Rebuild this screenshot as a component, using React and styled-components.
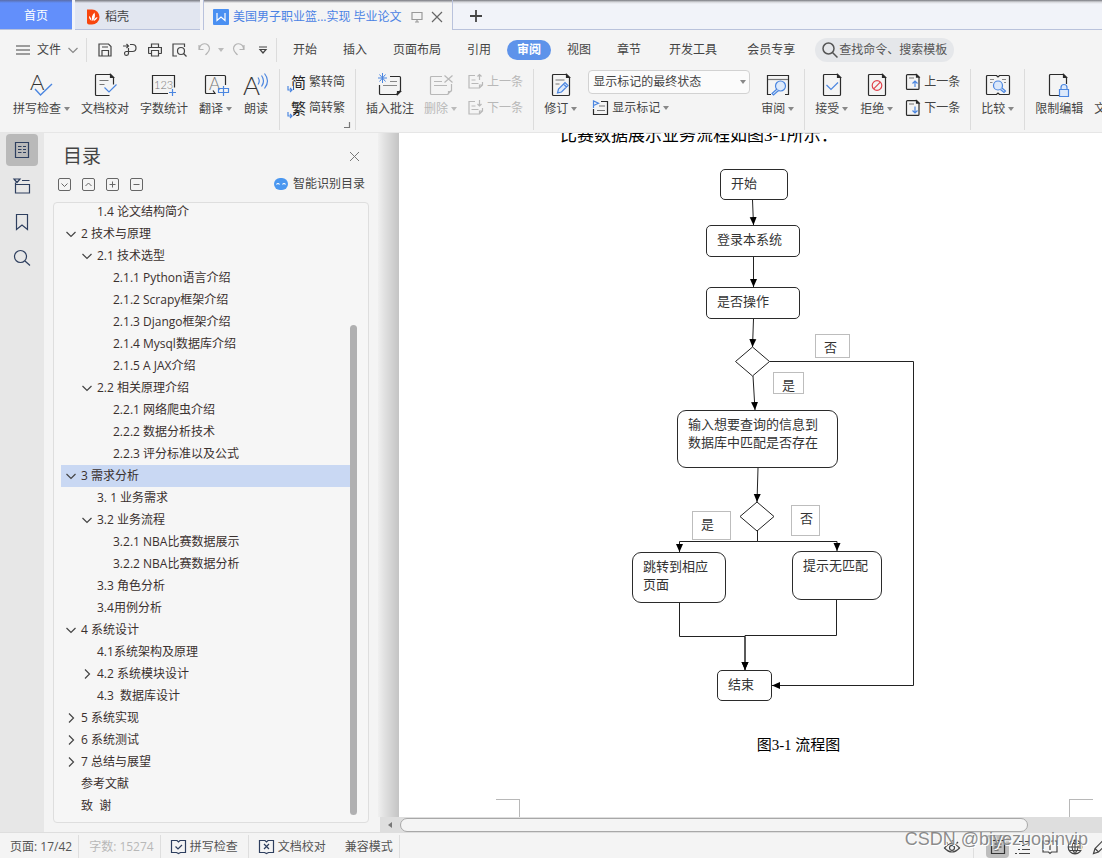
import React from 'react'
import styled, { createGlobalStyle } from 'styled-components'

const GlobalStyle = createGlobalStyle`
  * {
    box-sizing: border-box;
  }
  body {
    margin: 0;
    overflow: hidden;
    background: #f4f4f4;
  }
  button,
  select {
    margin: 0;
    padding: 0;
    border: 0;
    background: none;
    color: inherit;
    font: inherit;
    white-space: nowrap;
  }
  svg {
    display: block;
    flex: none;
    overflow: visible;
  }
`

const Shell = styled.div`
  position: relative;
  display: flex;
  flex-direction: column;
  height: 100vh;
  overflow: hidden;
  color: #444;
  font-family: 'Open Sans', 'Noto Sans CJK SC', sans-serif;
  font-size: 12px;
  line-height: 16px;
`

/* ---------- window tabs ---------- */

const TabBar = styled.div`
  display: flex;
  flex: none;
  height: 30px;
  background: linear-gradient(#77787f, #d4d5da 2px, #f1f3f9 4px);
`

const HomeTab = styled.button`
  width: 72px;
  padding-top: 2px;
  background: linear-gradient(#5a6da8, #628ffb 3px);
  color: #fff;
  border-bottom: 1px solid #b9c2dc;
`

const DocerTab = styled.button`
  display: flex;
  align-items: center;
  gap: 5px;
  width: 131px;
  padding: 3px 0 0 11px;
  border: solid #f1f3f9;
  border-width: 0 3px;
  border-right-color: #f4f4f6;
  background: linear-gradient(#77787f, #e2e6f0 3px);
  box-shadow: inset 0 -1px #b9c2dc;
`

const FileTab = styled.div`
  display: flex;
  align-items: center;
  width: 250px;
  padding: 3px 0 0 9px;
  border: solid #b9c2dc;
  border-width: 0 1px;
  background: linear-gradient(#77787f, #f4f4f4 3px);
  color: #4a82e4;
`

const FileName = styled.button`
  display: flex;
  align-items: center;
  gap: 4px;
  margin-right: 9px;
`

const TabIcon = styled.button`
  margin-right: 8px;
  color: ${props => props.$color};
`

const TabRest = styled.div`
  display: flex;
  flex: 1;
  align-items: center;
  padding: 3px 0 0 17px;
  border-bottom: 1px solid #b9c2dc;
`

/* ---------- menu row ---------- */

const MenuBar = styled.div`
  display: flex;
  flex: none;
  align-items: center;
  height: 39px;
  overflow: hidden;
  background: #f4f4f4;
`

const FileMenu = styled.button`
  display: flex;
  align-items: center;
  gap: 7px;
  width: 86px;
  padding-left: 16px;
`

const QuickBar = styled.div`
  display: flex;
  align-items: center;
  width: 191px;
  height: 24px;
  padding-left: 5px;
  border: solid #dcdcdc;
  border-width: 0 1px;
`

const QuickButton = styled.button`
  display: flex;
  align-items: center;
  justify-content: center;
  width: ${props => props.$width || 25}px;
  height: 22px;
  color: ${props => (props.$off ? '#b4b4b4' : '#444')};
`

const MenuTabs = styled.nav`
  display: flex;
  align-items: center;
  padding-left: 3px;
`

const MenuTab = styled.button`
  height: 20px;
  padding: 0 ${props => (props.$wide ? 15 : 13)}px;
`

const ActiveMenuTab = styled.button`
  height: 20px;
  margin: 0 3px;
  padding: 0 10px;
  border-radius: 10px;
  background: #5e93ea;
  color: #fff;
  font-weight: 700;
`

const Search = styled.button`
  display: flex;
  align-items: center;
  gap: 1px;
  height: 24px;
  margin-left: 5px;
  padding: 0 7px;
  border-radius: 12px;
  background: #e5e7ea;
  color: #555;
`

/* ---------- ribbon ---------- */

const RibbonBar = styled.div`
  position: relative;
  z-index: 1;
  display: flex;
  flex: none;
  height: 64px;
  padding-left: 3px;
  overflow: hidden;
  background: #f4f4f4;
  border-bottom: 1px solid #e6e6e6;
`

const Group = styled.div`
  position: relative;
  display: flex;
  flex: none;
  align-items: flex-start;
  gap: ${props => props.$gap || 11}px;
  height: 61px;
  padding: 0 10px;
  border-right: 1px solid #dcdcdc;
`

const BigButton = styled.button`
  display: flex;
  flex-direction: column;
  align-items: center;
  gap: 4px;
  padding-top: 4px;
  color: ${props => (props.$off ? '#b8b8b8' : '#444')};
`

const Label = styled.span`
  display: flex;
  align-items: center;
  gap: 3px;
`

const Stack = styled.div`
  display: flex;
  flex-direction: column;
`

const SmallButton = styled.button`
  display: flex;
  align-items: center;
  gap: 3px;
  height: 26px;
  padding-left: ${props => props.$indent || 0}px;
  color: ${props => (props.$off ? '#b8b8b8' : '#444')};
`

const Swap = styled.span`
  position: relative;
  width: 15px;
  color: #222;
  font-size: 15px;
  svg {
    position: absolute;
    left: -4px;
    bottom: -2px;
    background: #f4f4f4;
  }
`

const Launcher = styled.button`
  position: absolute;
  right: 5px;
  bottom: 2px;
`

const SelectWrap = styled.label`
  display: grid;
  align-items: center;
  width: 162px;
  height: 26px;
  svg {
    grid-area: 1 / 1;
    justify-self: end;
    margin-right: 4px;
    pointer-events: none;
  }
`

const Select = styled.select`
  grid-area: 1 / 1;
  width: 100%;
  height: 24px;
  padding-left: 4px;
  border: 1px solid #d2d2d2;
  border-radius: 4px;
  background: #fbfbfb;
  appearance: none;
`

/* ---------- workspace ---------- */

const Workspace = styled.div`
  display: flex;
  flex: 1;
  min-height: 0;
`

const Rail = styled.div`
  display: flex;
  flex: none;
  flex-direction: column;
  gap: 4px;
  width: 44px;
  padding: 1px 6px;
  background: #e7e7e7;
`

const RailButton = styled.button`
  display: flex;
  align-items: center;
  justify-content: center;
  height: 32px;
  border-radius: 4px;
  background: ${props => (props.$active ? '#b9b9b9' : 'none')};
  color: #2e3f5f;
`

const Panel = styled.aside`
  display: flex;
  flex: none;
  flex-direction: column;
  width: 334px;
  padding: 9px 9px 9px 9px;
`

const PanelHead = styled.div`
  display: flex;
  align-items: center;
  justify-content: space-between;
  height: 28px;
  padding: 0 9px 0 10px;
`

const PanelTitle = styled.h2`
  margin: 0;
  font-size: 19px;
  font-weight: 400;
`

const PanelTools = styled.div`
  display: flex;
  align-items: center;
  gap: 11px;
  height: 28px;
  padding: 0 4px 0 5px;
`

const Detect = styled.button`
  display: flex;
  align-items: center;
  gap: 5px;
  margin-left: auto;
`

const Outline = styled.div`
  display: flex;
  flex: 1;
  min-height: 0;
  margin-top: 4px;
  padding: 0 10px 0 7px;
  overflow: hidden;
  border: 1px solid #dedede;
  border-radius: 4px;
  background: #f6f6f6;
`

const Tree = styled.ul`
  flex: 1;
  margin: -2px 0 0;
  padding: 0;
  list-style: none;
`

const TreeRow = styled.li`
  display: flex;
  align-items: center;
  height: 22px;
  padding-left: ${props => 5 + props.$level * 16}px;
  background: ${props => (props.$active ? '#c9d8f3' : 'none')};
  color: #3a302e;
  white-space: pre;
`

const Twist = styled.span`
  width: 15px;
`

const Track = styled.div`
  display: flex;
  align-items: flex-end;
  width: 8px;
  padding-bottom: 7px;
`

const Thumb = styled.div`
  width: 7px;
  height: 80%;
  border-radius: 4px;
  background: #b0b0b1;
`

/* ---------- document ---------- */

const DocArea = styled.main`
  display: flex;
  flex: 1;
  flex-direction: column;
  min-width: 0;
`

const DocView = styled.div`
  display: flex;
  flex: 1;
  min-height: 0;
  overflow: hidden;
`

const Gutter = styled.div`
  flex: none;
  width: 21px;
  background: linear-gradient(90deg, #f0f0f0, #e2e2e2 6px, #d4d4d4 13px, #c4c4c4);
`

const Page = styled.div`
  display: flex;
  flex: 1;
  flex-direction: column;
  min-width: 0;
  margin-top: -9px;
  background: #fff;
  color: #000;
  font-family: 'Liberation Serif', 'Noto Sans CJK SC', serif;
`

const Body = styled.div`
  padding: 0 33px 0 121px;
`

const Paragraph = styled.p`
  margin: 0 0 16px;
  padding-left: 40px;
  font-size: 17px;
  line-height: 24px;
`

const Figure = styled.figure`
  display: flex;
  flex-direction: column;
  align-items: center;
  gap: 21px;
  margin: 0;
`

const Canvas = styled.div`
  position: relative;
  width: 325px;
  height: 550px;
  font-family: 'Noto Sans CJK SC', sans-serif;
`

const Node = styled.div`
  position: absolute;
  left: ${props => props.$x}px;
  top: ${props => props.$y}px;
  width: ${props => props.$w}px;
  height: ${props => props.$h}px;
  padding: 4px 10px;
  border: 1px solid #2b2b2b;
  border-radius: ${props => props.$r}px;
  color: #333;
  font-size: 13px;
  line-height: 18px;
  white-space: pre;
`

const Tag = styled(Node)`
  padding: 3px 8px;
  border-color: #bdbdbd;
`

const Caption = styled.figcaption`
  padding-left: 8px;
  font-size: 15px;
  line-height: 20px;
`

const Margins = styled.div`
  display: flex;
  justify-content: space-between;
  margin-top: auto;
  padding: 0 9px 0 97px;
`

const Corner = styled.span`
  width: 24px;
  height: 18px;
  border-top: 1px solid #b8b8b8;
  border-right: ${props => (props.$left ? '1px solid #b8b8b8' : 0)};
  border-left: ${props => (props.$left ? 0 : '1px solid #b8b8b8')};
`

const HScroll = styled.div`
  display: flex;
  flex: none;
  align-items: center;
  height: 15px;
  margin-left: 2px;
  background: #dedede;
`

const HArrow = styled.button`
  display: flex;
  align-items: center;
  justify-content: center;
  width: 20px;
`

const HThumb = styled.div`
  width: 87%;
  height: 14px;
  border: 1px solid #a8a8a8;
  border-radius: 7px;
  background: #f4f4f4;
`

/* ---------- status bar ---------- */

const StatusBar = styled.footer`
  display: flex;
  flex: none;
  height: 26px;
  padding-top: 2px;
  overflow: hidden;
  background: #f4f4f4;
  border-top: 1px solid #dedede;
`

const StatusItem = styled.button`
  display: flex;
  align-items: center;
  gap: 4px;
  padding: 0 ${props => props.$right || 6}px 0 10px;
  border-right: ${props => (props.$open ? 0 : '1px solid #dedede')};
  color: ${props => (props.$off ? '#b8b8b8' : '#555')};
`

const Views = styled.div`
  display: flex;
  align-items: center;
  margin-left: auto;
  margin-right: -10px;
`

const ViewButton = styled.button`
  display: flex;
  align-items: center;
  justify-content: center;
  width: ${props => props.$width || 25}px;
  height: 23px;
  border-radius: 4px;
  background: ${props => (props.$active ? '#bdbdbd' : 'none')};
`

const Divider = styled.span`
  align-self: stretch;
  width: 1px;
  margin: 0 12px 0 9px;
  background: #dedede;
`

const Watermark = styled.span`
  position: absolute;
  right: 14px;
  bottom: 8px;
  color: rgba(120, 120, 120, 0.85);
  font-family: 'Liberation Sans', sans-serif;
  font-size: 18px;
  line-height: 22px;
  pointer-events: none;
  text-shadow: 1px 1px #fff;
`

/* ---------- icons ---------- */

const BLUE = '#4b86e0'

const Svg = ({ w = 16, h = w, children, ...rest }) => (
  <svg
    width={w}
    height={h}
    viewBox={`0 0 ${w} ${h}`}
    fill="none"
    stroke="currentColor"
    strokeWidth="1.2"
    aria-hidden="true"
    {...rest}
  >
    {children}
  </svg>
)

const Caret = ({ color = '#888' }) => (
  <Svg w={6} h={4} stroke="none">
    <path d="M0 0h6L3 4z" fill={color} />
  </Svg>
)

const Chevron = ({ right, color = '#444' }) => (
  <Svg w={10} stroke={color}>
    <path d={right ? 'M3 0.5l4.5 4.5L3 9.5' : 'M0.5 3L5 7.5 9.5 3'} />
  </Svg>
)

const Glyph = ({ x, y, size, color = '#333', children }) => (
  <text
    x={x}
    y={y}
    fontSize={size}
    fontWeight="300"
    fontFamily="Lato"
    fill={color}
    stroke="none"
  >
    {children}
  </text>
)

const Sheet = ({ children }) => (
  <Svg w={24} stroke="#2b2b2b" strokeWidth="1.2">
    <path d="M17.5 1.500H4.500a1 1 0 0 0-1 1v19a1 1 0 0 0 1 1h15a1 1 0 0 0 1-1V4.500z" />
    <path d="M17.500 1.500v3h3z" fill="#2b2b2b" />
    {children}
  </Svg>
)

const SmallSheet = ({ down }) => (
  <Svg w={16} stroke="#2b2b2b">
    <path d="M11.500 0.600H2.500a1 1 0 0 0-1 1v12.800a1 1 0 0 0 1 1h10.500a1 1 0 0 0 1-1V3z" />
    <path d="M11.500 0.600v2.500h2.500z" fill="#2b2b2b" />
    <path d="M4 4h5" stroke="#888" />
    <path
      d={down ? 'M10 6.500V13M7.500 10.500L10 13l2.500-2.500' : 'M10 13V7M7.500 9.500L10 7l2.500 2.500'}
      stroke={BLUE}
    />
  </Svg>
)

const SmallNote = ({ down }) => (
  <Svg w={17} h={16}>
    <path d="M8 1.500H2v12.500h10.500l3-3V8M15.500 11h-3v3M4.500 6h4M4.500 9.500h7" />
    <path d={down ? 'M12.500 0v6M10.500 4l2 2 2-2' : 'M12.500 6V0.500M10.500 2.500l2-2 2 2'} />
  </Svg>
)

const SpellIcon = () => (
  <Svg w={24} stroke={BLUE} strokeWidth="1.4">
    <Glyph x={0} y={17} size={22}>A</Glyph>
    <path d="M5 16l5.500 6L22 11" />
  </Svg>
)

const ProofIcon = () => (
  <Svg w={24} stroke="#2b2b2b">
    <path d="M16.500 22.500h-13a1 1 0 0 1-1-1v-19a1 1 0 0 1 1-1h14l3 3v7" />
    <path d="M17.500 1.500v3h3z" fill="#2b2b2b" />
    <path d="M6.500 7.500h9M6.500 11.500h5" stroke="#777" />
    <path d="M11.500 14.500l4.500 4.500 7.500-7.500" stroke={BLUE} />
  </Svg>
)

const CountIcon = () => (
  <Svg w={26} h={24} stroke="#2b2b2b">
    <path d="M17 20.500H1.500V2.500h22v12" />
    <Glyph x={3} y={16} size={11} color="#777">123</Glyph>
    <path d="M21.500 16v7M18 19.500h7" stroke={BLUE} />
  </Svg>
)

const TranslateIcon = () => (
  <Svg w={26} h={24} stroke="#2b2b2b">
    <path d="M9 20.500H3.500a1 1 0 0 1-1-1v-16a1 1 0 0 1 1-1h18a1 1 0 0 1 1 1V12M9 20.500h3l-2-3" />
    <Glyph x={6} y={17} size={17} color="#777">A</Glyph>
    <path d="M15.500 15.500h10v4h-10zM20.500 13v10" stroke={BLUE} />
  </Svg>
)

const ReadIcon = () => (
  <Svg w={26} h={24} stroke={BLUE}>
    <Glyph x={0} y={22} size={26}>A</Glyph>
    <path d="M15 4.500q2.500 3.500 0 7M18.500 2.500q4 5.500 0 11M21.500 0.500q6 7.500 0 15" />
  </Svg>
)

const CommentIcon = () => (
  <Svg w={24} stroke="#2b2b2b">
    <path d="M12 3.500h9.500a1 1 0 0 1 1 1v13l-4 4H2.500a1 1 0 0 1-1-1V12" />
    <path d="M22.500 18.500h-3v3z" fill="#2b2b2b" />
    <path d="M12 8.500h7M5 12.500h14" stroke="#888" />
    <path d="M4.500 0v10M0 5h9M1.500 1.500l6 7M7.500 1.500l-6 7" stroke={BLUE} strokeWidth="1" />
  </Svg>
)

const DeleteIcon = () => (
  <Svg w={24}>
    <path d="M13 3.500H2.500a1 1 0 0 0-1 1v16a1 1 0 0 0 1 1h16l4-4V11M22.500 18.500h-3v3M5 8.500h8M5 12.500h13" />
    <path d="M15.500 2.500l8 7M23.500 2.500l-8 7" />
  </Svg>
)

const ReviseIcon = () => (
  <Sheet>
    <path d="M6.500 7h9M6.500 11h4" stroke="#777" />
    <path
      d="M8.500 20l1-4 6.500-6.500 3 3-6.500 6.500zM14.500 11l3 3"
      fill="#dce9fb"
      stroke={BLUE}
    />
  </Sheet>
)

const FlagIcon = () => (
  <Svg w={17} h={16} stroke="#2b2b2b">
    <path d="M9 1.500h6.500v13H1.500V9" />
    <path d="M7 6h6M5 10.500h8" stroke="#777" />
    <path d="M1.500 8V1l5 2.200-5 2.300" stroke={BLUE} />
  </Svg>
)

const ReviewIcon = () => (
  <Svg w={24} stroke="#2b2b2b">
    <path d="M5 21.500H1.500v-19h21v19H19" />
    <path d="M2 6.500h20" stroke="#777" />
    <circle cx="14.500" cy="13" r="5" fill="#dce9fb" stroke={BLUE} />
    <path d="M11 16l-5 4.500L7.500 22l5-4.500" fill="#dce9fb" stroke={BLUE} />
  </Svg>
)

const AcceptIcon = () => (
  <Sheet>
    <path d="M6.500 12l4.500 4.500L18 9.500" stroke={BLUE} />
  </Sheet>
)

const RejectIcon = () => (
  <Sheet>
    <circle cx="12" cy="12.500" r="4.800" stroke="#e0424c" />
    <path d="M8.700 15.800l6.600-6.600" stroke="#e0424c" />
  </Sheet>
)

const CompareIcon = () => (
  <Svg w={24} stroke="#2b2b2b">
    <path d="M10.500 21.500H1.500a1 1 0 0 1-1-1V3.500a1 1 0 0 1 1-1h9L12 4l1.500-1.500h9a1 1 0 0 1 1 1v17a1 1 0 0 1-1 1h-9L12 20z" />
    <path d="M4 6.500h4M16 6.500h4M4 9.500h2.500M18 9.500h2" stroke="#888" />
    <circle cx="12" cy="12.500" r="4.500" fill="#dce9fb" stroke={BLUE} />
    <path d="M14.500 16.500l3.500 3 1.500-1.500-3.500-3" fill="#dce9fb" stroke={BLUE} />
  </Svg>
)

const RestrictIcon = () => (
  <Svg w={26} h={24} stroke="#2b2b2b">
    <path d="M13 22.500H4.500a1 1 0 0 1-1-1v-19a1 1 0 0 1 1-1h13L20.500 4.500V11" />
    <path d="M17.500 1.500v3h3z" fill="#2b2b2b" />
    <path d="M13.500 16.500h9v7h-9zM15 16.500v-2a3 3 0 0 1 6 0v2" fill="#dce9fb" stroke={BLUE} />
  </Svg>
)

const Arrow = () => (
  <Svg w={6} stroke={BLUE}>
    <path d="M1 0v4h4M3 2l2 2-2 2" />
  </Svg>
)

const BoxIcon = ({ d }) => (
  <Svg w={13} stroke="#666" strokeWidth="1">
    <rect x="0.500" y="0.500" width="12" height="12" rx="1.500" />
    <path d={d} />
  </Svg>
)

const CheckBook = ({ cross }) => (
  <Svg w={15} stroke="#2e3f5f">
    <path d="M6 1.500H0.500v12h5l2 1 2-1h5v-12H9L7.500 3z" />
    <path d={cross ? 'M5 5l5 5M10 5l-5 5' : 'M4.500 7.500L7 10l4-4'} />
  </Svg>
)

/* ---------- data ---------- */

const outline = [
  [1, '1.4 论文结构简介'],
  [0, '2 技术与原理', 'open'],
  [1, '2.1 技术选型', 'open'],
  [2, '2.1.1 Python语言介绍'],
  [2, '2.1.2 Scrapy框架介绍'],
  [2, '2.1.3 Django框架介绍'],
  [2, '2.1.4 Mysql数据库介绍'],
  [2, '2.1.5 A JAX介绍'],
  [1, '2.2 相关原理介绍', 'open'],
  [2, '2.2.1 网络爬虫介绍'],
  [2, '2.2.2 数据分析技术'],
  [2, '2.2.3 评分标准以及公式'],
  [0, '3 需求分析', 'open', true],
  [1, '3. 1 业务需求'],
  [1, '3.2 业务流程', 'open'],
  [2, '3.2.1 NBA比赛数据展示'],
  [2, '3.2.2 NBA比赛数据分析'],
  [1, '3.3 角色分析'],
  [1, '3.4用例分析'],
  [0, '4 系统设计', 'open'],
  [1, '4.1系统架构及原理'],
  [1, '4.2 系统模块设计', 'closed'],
  [1, '4.3  数据库设计'],
  [0, '5 系统实现', 'closed'],
  [0, '6 系统测试', 'closed'],
  [0, '7 总结与展望', 'closed'],
  [0, '参考文献'],
  [0, '致  谢'],
]

const nodes = [
  { x: 88, y: 5, w: 68, h: 31, r: 5, text: '开始' },
  { x: 74, y: 61, w: 94, h: 32, r: 5, text: '登录本系统' },
  { x: 74, y: 123, w: 94, h: 32, r: 5, text: '是否操作' },
  { x: 45, y: 246, w: 161, h: 58, r: 9, text: '输入想要查询的信息到\n数据库中匹配是否存在' },
  { x: 0, y: 388, w: 94, h: 51, r: 9, text: '跳转到相应\n页面' },
  { x: 160, y: 387, w: 90, h: 49, r: 9, text: '提示无匹配' },
  { x: 85, y: 506, w: 55, h: 31, r: 5, text: '结束' },
]

const tags = [
  { x: 183, y: 170, w: 35, h: 24, text: '否' },
  { x: 141, y: 208, w: 31, h: 22, text: '是' },
  { x: 60, y: 347, w: 39, h: 29, text: '是' },
  { x: 159, y: 341, w: 29, h: 31, text: '否' },
]

const Flow = () => (
  <Canvas>
    <Svg w={325} h={550} stroke="#222" strokeWidth="1">
      <defs>
        <marker
          id="tip"
          viewBox="0 0 8 8"
          refX="8"
          refY="4"
          markerWidth="8"
          markerHeight="8"
          orient="auto"
          markerUnits="userSpaceOnUse"
        >
          <path d="M0 0.500L8 4 0 7.500z" fill="#000" stroke="none" />
        </marker>
      </defs>
      <g markerEnd="url(#tip)">
        <path d="M120.500 36l1 25" />
        <path d="M121.500 93v30" />
        <path d="M121.500 155l-1 28" />
        <path d="M121 212l2 34" />
        <path d="M126 304l-1 34" />
        <path d="M125.500 366v11.500h-78V388" />
        <path d="M125.500 366v11.500h79.500V387" />
        <path d="M47.500 439v33.500h65.500V506" />
        <path d="M204.500 436v35.500h-91.500V506" />
        <path d="M137.500 197.500h144v324H140" />
      </g>
      <path d="M120.500 183l17 14.500-17 14.500-17-14.500zM125 338l17 14.500-17 14.500-17-14.500z" fill="#fff" />
    </Svg>
    {nodes.map(n => (
      <Node key={n.text} $x={n.x} $y={n.y} $w={n.w} $h={n.h} $r={n.r}>
        {n.text}
      </Node>
    ))}
    {tags.map(t => (
      <Tag key={t.x} $x={t.x} $y={t.y} $w={t.w} $h={t.h} $r={0}>
        {t.text}
      </Tag>
    ))}
  </Canvas>
)

const Big = ({ icon, text, menu, off }) => (
  <BigButton $off={off}>
    {icon}
    <Label>
      {text}
      {menu && <Caret color={off ? '#bbb' : '#888'} />}
    </Label>
  </BigButton>
)

const Tabs = () => (
  <TabBar>
    <HomeTab>首页</HomeTab>
    <DocerTab>
      <Svg w={14} h={16} stroke="none">
        <path d="M1 0.500h5a7.500 7.500 0 0 1 0 15H3a2 2 0 0 1-2-2z" fill="#f8460f" />
        <path d="M6.500 12C5 9 6 6 8.500 3.500 9.500 7 9 10 6.500 12zM5.500 12C3.500 10.500 3 9 3 7c1.500 1 2.500 2.500 2.500 5zM7.500 12c.5-2 2-3.500 4-4-.5 2-2 3.500-4 4z" fill="#fff" />
      </Svg>
      稻壳
    </DocerTab>
    <FileTab>
      <FileName>
        <Svg w={16} stroke="#fff">
          <rect width="16" height="16" rx="1" fill="#4a90f2" stroke="none" />
          <path d="M4 4v7.500L8 8l4 3.500V4" />
        </Svg>
        美国男子职业篮...实现 毕业论文
      </FileName>
      <TabIcon $color="#999" aria-label="投影">
        <Svg w={12}>
          <path d="M1 1.500h10v7H1zM6 8.500V11M4 11h4" />
        </Svg>
      </TabIcon>
      <TabIcon $color="#666" aria-label="关闭">
        <Svg w={12}>
          <path d="M1 1l10 10M11 1L1 11" />
        </Svg>
      </TabIcon>
    </FileTab>
    <TabRest>
      <TabIcon $color="#444" aria-label="新建">
        <Svg w={12} strokeWidth="1.8">
          <path d="M6 0v12M0 6h12" />
        </Svg>
      </TabIcon>
    </TabRest>
  </TabBar>
)

const Menu = () => (
  <MenuBar>
    <FileMenu>
      <Svg w={14} h={10}>
        <path d="M0 1h14M0 5h14M0 9h14" />
      </Svg>
      文件
      <Chevron color="#888" />
    </FileMenu>
    <QuickBar>
      <QuickButton aria-label="保存">
        <Svg w={14}>
          <path d="M1 1h9.500L13 3.500V13H1zM4 13V7.500h6.500V13M4 4h6" />
        </Svg>
      </QuickButton>
      <QuickButton aria-label="输出">
        <Svg w={14}>
          <path d="M0 3h5.500M3.500 1l2 2-2 2M7 1.500h2.500a3.500 3.500 0 0 1 0 7H3a2 2 0 1 0 2.500 2V5" />
        </Svg>
      </QuickButton>
      <QuickButton aria-label="打印">
        <Svg w={14}>
          <path d="M3.500 4V1h7v3M3.500 10.500H1a.5.5 0 0 1-.4-.5V4.500h12.800V10a.5.5 0 0 1-.4.500h-2.500M3.500 7.500h7V13h-7z" />
        </Svg>
      </QuickButton>
      <QuickButton aria-label="打印预览">
        <Svg w={15} h={14}>
          <path d="M5 13H1V1h11.500v3" />
          <circle cx="9" cy="8" r="3.500" />
          <path d="M11.500 10.500l3 3" />
        </Svg>
      </QuickButton>
      <QuickButton $off aria-label="撤销">
        <Svg w={14}>
          <path d="M1 2v4.500h4.500M1.500 6a5 5 0 0 1 10-.5c0 3-2 4-4 6.500" />
        </Svg>
      </QuickButton>
      <QuickButton $width={8} $off aria-label="撤销列表">
        <Caret color="#bbb" />
      </QuickButton>
      <QuickButton $off aria-label="恢复">
        <Svg w={14}>
          <path d="M13 2v4.500H8.500M12.500 6a5 5 0 0 0-10-.5c0 3 2 4 4 6.500" />
        </Svg>
      </QuickButton>
      <QuickButton aria-label="更多">
        <Svg w={8}>
          <path d="M0 1h8M1 3.500L4 7l3-3.500z" />
        </Svg>
      </QuickButton>
    </QuickBar>
    <MenuTabs>
      <MenuTab>开始</MenuTab>
      <MenuTab>插入</MenuTab>
      <MenuTab>页面布局</MenuTab>
      <MenuTab>引用</MenuTab>
      <ActiveMenuTab>审阅</ActiveMenuTab>
      <MenuTab>视图</MenuTab>
      <MenuTab>章节</MenuTab>
      <MenuTab $wide>开发工具</MenuTab>
      <MenuTab $wide>会员专享</MenuTab>
    </MenuTabs>
    <Search>
      <Svg w={16} strokeWidth="1.5">
        <circle cx="6.500" cy="6.500" r="5.500" />
        <path d="M10.500 10.500l5 5" />
      </Svg>
      查找命令、搜索模板
    </Search>
  </MenuBar>
)

const Ribbon = () => (
  <RibbonBar>
    <Group>
      <Big icon={<SpellIcon />} text="拼写检查" menu />
      <Big icon={<ProofIcon />} text="文档校对" />
      <Big icon={<CountIcon />} text="字数统计" />
      <Big icon={<TranslateIcon />} text="翻译" menu />
      <Big icon={<ReadIcon />} text="朗读" />
    </Group>
    <Group>
      <Stack>
        <SmallButton $indent={1}>
          <Swap>简<Arrow /></Swap>
          繁转简
        </SmallButton>
        <SmallButton $indent={1}>
          <Swap>繁<Arrow /></Swap>
          简转繁
        </SmallButton>
      </Stack>
      <Launcher aria-label="更多设置">
        <Svg w={6} stroke="#777">
          <path d="M0 5.500h5.500V0" />
        </Svg>
      </Launcher>
    </Group>
    <Group $gap={10}>
      <Big icon={<CommentIcon />} text="插入批注" />
      <Big icon={<DeleteIcon />} text="删除" menu off />
      <Stack>
        <SmallButton $off>
          <SmallNote />
          上一条
        </SmallButton>
        <SmallButton $off>
          <SmallNote down />
          下一条
        </SmallButton>
      </Stack>
    </Group>
    <Group>
      <Big icon={<ReviseIcon />} text="修订" menu />
      <Stack>
        <SelectWrap>
          <Select aria-label="显示状态">
            <option>显示标记的最终状态</option>
          </Select>
          <Caret />
        </SelectWrap>
        <SmallButton $indent={4}>
          <FlagIcon />
          <Label>
            显示标记
            <Caret />
          </Label>
        </SmallButton>
      </Stack>
      <Big icon={<ReviewIcon />} text="审阅" menu />
    </Group>
    <Group $gap={12}>
      <Big icon={<AcceptIcon />} text="接受" menu />
      <Big icon={<RejectIcon />} text="拒绝" menu />
      <Stack>
        <SmallButton>
          <SmallSheet />
          上一条
        </SmallButton>
        <SmallButton>
          <SmallSheet down />
          下一条
        </SmallButton>
      </Stack>
    </Group>
    <Group>
      <Big icon={<CompareIcon />} text="比较" menu />
    </Group>
    <Group>
      <Big icon={<RestrictIcon />} text="限制编辑" />
      <Big icon={<AcceptIcon />} text="文档权限" />
    </Group>
  </RibbonBar>
)

const SidePanel = () => (
  <>
    <Rail>
      <RailButton $active aria-label="目录">
        <Svg w={16} h={18}>
          <path d="M1.500 1.500h13v15h-13zM4 5.500h3.500M9 5.500h3M4 8.500h3.500M9 8.500h3M4 11.500h3.500M9 11.500h3" />
        </Svg>
      </RailButton>
      <RailButton aria-label="章节">
        <Svg w={18} h={16}>
          <path d="M1 1h6L4 4.500zM9 2.500h7.500M2.500 4.500V15h14V6.500h-14" />
        </Svg>
      </RailButton>
      <RailButton aria-label="书签">
        <Svg w={14} h={18}>
          <path d="M1.500 1.500h11v15L7 12l-5.500 4.500z" />
        </Svg>
      </RailButton>
      <RailButton aria-label="查找">
        <Svg w={18}>
          <circle cx="7.500" cy="7.500" r="6" />
          <path d="M12 12l5 4.500" />
        </Svg>
      </RailButton>
    </Rail>
    <Panel>
      <PanelHead>
        <PanelTitle>目录</PanelTitle>
        <button aria-label="关闭目录">
          <Svg w={11} stroke="#777" strokeWidth="1">
            <path d="M1 1l9 9M10 1l-9 9" />
          </Svg>
        </button>
      </PanelHead>
      <PanelTools>
        <button aria-label="展开"><BoxIcon d="M3.500 5.500l3 3 3-3" /></button>
        <button aria-label="收起"><BoxIcon d="M3.500 8l3-3 3 3" /></button>
        <button aria-label="添加"><BoxIcon d="M3.500 6.500h6M6.500 3.500v6" /></button>
        <button aria-label="减少"><BoxIcon d="M3.500 6.500h6" /></button>
        <Detect>
          <Svg w={14} h={12} stroke="#fff">
            <rect y="0" width="14" height="12" rx="6" fill="#4a97f0" stroke="none" />
            <path d="M2.500 6.500q1.500-2 3 0M8.500 6.500q1.500-2 3 0" />
          </Svg>
          智能识别目录
        </Detect>
      </PanelTools>
      <Outline>
        <Tree>
          {outline.map(([level, text, state, active]) => (
            <TreeRow key={text} $level={level} $active={active}>
              <Twist>{state && <Chevron right={state === 'closed'} />}</Twist>
              {text}
            </TreeRow>
          ))}
        </Tree>
        <Track>
          <Thumb />
        </Track>
      </Outline>
    </Panel>
  </>
)

const Document = () => (
  <DocArea>
    <DocView>
      <Gutter />
      <Page>
        <Body>
          <Paragraph>比赛数据展示业务流程如图3-1所示：</Paragraph>
          <Figure>
            <Flow />
            <Caption>图3-1 流程图</Caption>
          </Figure>
        </Body>
        <Margins>
          <Corner $left />
          <Corner />
        </Margins>
      </Page>
    </DocView>
    <HScroll>
      <HArrow aria-label="向左">
        <Svg w={4} h={6} stroke="none">
          <path d="M4 0v6L0 3z" fill="#777" />
        </Svg>
      </HArrow>
      <HThumb />
    </HScroll>
  </DocArea>
)

const Status = () => (
  <StatusBar>
    <StatusItem>页面: 17/42</StatusItem>
    <StatusItem $off>字数: 15274</StatusItem>
    <StatusItem $right={10}>
      <CheckBook />
      拼写检查
    </StatusItem>
    <StatusItem $open $right={9}>
      <CheckBook cross />
      文档校对
    </StatusItem>
    <StatusItem>兼容模式</StatusItem>
    <Views>
      <ViewButton aria-label="护眼">
        <Svg w={16} stroke="#444">
          <path d="M0.500 9q7.500-9 15 0-7.500 8-15 0zM2 3l1.500 1.500M14 3l-1.500 1.500M8 1v2" />
          <circle cx="8" cy="8.800" r="2.500" />
        </Svg>
      </ViewButton>
      <Divider />
      <ViewButton $active $width={23} aria-label="页面视图">
        <Svg w={16} stroke="#333">
          <path d="M1.500 1.500h13v13h-13zM4.500 5h7M4.500 8h7M4.500 11h4" />
        </Svg>
      </ViewButton>
      <ViewButton $width={28} aria-label="大纲">
        <Svg w={16} stroke="#444">
          <path d="M0 2.500h2M4 2.500h11M3 6.500h2M7 6.500h8M3 10.500h2M7 10.500h8M0 14.500h2M4 14.500h11" />
        </Svg>
      </ViewButton>
      <ViewButton aria-label="阅读版式">
        <Svg w={16} stroke="#444">
          <path d="M8 3.500L6.500 2H1v11h5.500L8 14.500 9.500 13H15V2H9.500zM8 3.500V11" />
        </Svg>
      </ViewButton>
      <ViewButton aria-label="Web 版式">
        <Svg w={16} stroke="#444">
          <circle cx="8" cy="8" r="6.800" />
          <path d="M1 8h14M8 1v14M2.500 4.500h11M2.500 11.500h11M8 1q-6 7 0 14M8 1q6 7 0 14" strokeWidth="1" />
        </Svg>
      </ViewButton>
      <ViewButton aria-label="写作">
        <Svg w={16} stroke="#444">
          <path d="M1.500 14.500l1.500-5L11 1.500l3.500 3.500-8 8zM3 9.500l3.500 3.500" />
        </Svg>
      </ViewButton>
    </Views>
  </StatusBar>
)

const App = () => (
  <Shell>
    <GlobalStyle />
    <Tabs />
    <Menu />
    <Ribbon />
    <Workspace>
      <SidePanel />
      <Document />
    </Workspace>
    <Status />
    <Watermark>CSDN @biyezuopinvip</Watermark>
  </Shell>
)

export default App
